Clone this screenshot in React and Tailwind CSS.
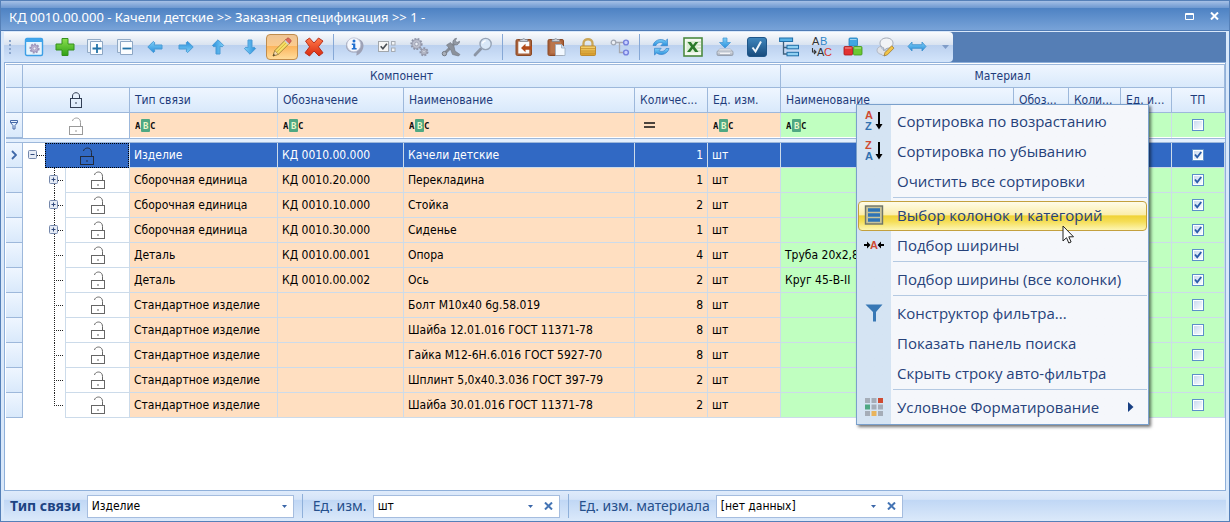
import React from "react";

const svg = (children, size = 20) => (
  <svg width={size} height={size} viewBox="0 0 20 20" fill="none" className="overflow-visible" aria-hidden="true">
    {children}
  </svg>
);

function Defs() {
  const g = (id, a, b) => (
    <linearGradient id={id} x1="0" y1="0" x2="0" y2="1">
      <stop offset="0" stopColor={a} />
      <stop offset="1" stopColor={b} />
    </linearGradient>
  );
  return (
    <svg width="0" height="0" className="absolute" aria-hidden="true">
      <defs>
        {g("gBlue", "#7fd0f7", "#2a8fdc")}
        {g("gGreen", "#8be04e", "#2fa016")}
        {g("gRed", "#ff7a4a", "#d92a10")}
        {g("gGold", "#f7d774", "#d79a26")}
        {g("gCheck", "#3f86bd", "#174a7c")}
        {g("gGray", "#e4e8ee", "#a3abb8")}
      </defs>
    </svg>
  );
}

const blueArrow = (rotation) =>
  svg(
    <path
      transform={`rotate(${rotation} 10 10)`}
      d="M2.8 10 L8.4 4.4 L9.8 5.8 L9.2 8 H17 V12 H9.2 L9.8 14.2 L8.4 15.6 Z"
      fill="url(#gBlue)"
      stroke="#4a9bd6"
      strokeWidth="1"
      strokeLinejoin="round"
    />
  );

const stackedBox = (plus) =>
  svg(
    <>
      <path d="M2.5 2.5H15.5V15.5H2.5Z" fill="#eaf2fb" stroke="#93abc6" />
      <path d="M5.5 4.5H17.5V17.5H5.5Z" fill="#fbfdff" stroke="#8ca6c4" />
      <path d={plus ? "M7.5 11.5h9M12 7v9" : "M7.5 11.5h9"} stroke="#2373a8" strokeWidth="1.8" />
    </>
  );

const cog = (cx, cy, r, fill, stroke) => (
  <>
    <circle cx={cx} cy={cy} r={r} fill={fill} stroke={stroke} strokeWidth="2.2" strokeDasharray="1.8 1.2" />
    <circle cx={cx} cy={cy} r={r - 0.6} fill={fill} stroke={stroke} strokeWidth="0.7" />
    <circle cx={cx} cy={cy} r={r * 0.35} fill="#eef2f8" stroke={stroke} strokeWidth="0.7" />
  </>
);

const clipboard = (front) =>
  svg(
    <>
      <rect x="2" y="2.5" width="15.5" height="16" rx="1.4" fill="#a9613a" stroke="#8a4925" />
      {front}
      <path d="M6 4.5V2.6h2.2C8.4 1.4 11 1.4 11.3 2.6h2.2v1.9z" fill="#c9cfd8" stroke="#7a828e" strokeWidth="0.7" />
    </>
  );

const icons = {
  settings: svg(
    <>
      <rect x="1.5" y="1.5" width="17" height="17" rx="1.5" fill="#e6f4fd" stroke="#3c9fe6" strokeWidth="1.4" />
      <path d="M1.5 5V3q0-1.5 1.5-1.5h14q1.5 0 1.5 1.5v2z" fill="#3fa5ec" />
      {cog(10.5, 11.5, 4, "#bcb4d2", "#9b93ba")}
    </>
  ),
  add: svg(
    <path d="M7 1.5h6V7h6v6h-6v5.5H7V13H1V7h6z" fill="url(#gGreen)" stroke="#35901c" strokeLinejoin="round" />
  ),
  expand: stackedBox(true),
  collapse: stackedBox(false),
  left: blueArrow(0),
  right: blueArrow(180),
  up: blueArrow(90),
  down: blueArrow(270),
  edit: svg(
    <>
      <path d="M1 19l1.8-5.4L14.2 2.2l3.7 3.7L6.4 17.3z" fill="#f7e069" stroke="#94742c" strokeWidth="0.8" />
      <path d="M4 15.8L15.8 4" stroke="#d8b135" strokeWidth="1" />
      <path d="M13 3.4L15 1.4q1-1 2.2 0l1.5 1.5q1 1 0 2L16.7 7z" fill="#e0675b" stroke="#a9453c" strokeWidth="0.7" />
      <path d="M12.4 4l1-1 3.7 3.7-1 1z" fill="#cdd3db" />
      <path d="M1 19l1.8-5.4 3.6 3.7z" fill="#f3d9b0" stroke="#94742c" strokeWidth="0.6" />
      <path d="M1 19l.7-2.2 1.5 1.5z" fill="#3c3325" />
    </>
  ),
  remove: svg(
    <path
      d="M1.5 4L5.5 1L10 6L14.5 1L19 4L14.4 9.8L19 15.8L15 19L10 14L5.5 19L1 15.8L5.6 9.8Z"
      fill="url(#gRed)" stroke="#b32511" strokeWidth="0.9" strokeLinejoin="round"
    />
  ),
  info: svg(
    <>
      <path d="M9.5 1.2c5.2 0 9 3 9 7.2 0 4-2.5 8.4-7.4 10.2.6-1.5.7-2.2.4-3.1C5 16.2 1 13 1 8.4c0-4.2 3.6-7.2 8.5-7.2z" fill="#9da1b5" />
      <circle cx="8.8" cy="7.8" r="7" fill="#f5f7fd" stroke="#b9bfd2" strokeWidth="0.8" />
      <circle cx="9" cy="4" r="1.5" fill="#1f6fd0" />
      <path d="M6.8 6.5h3.5v4.5h1.3v1.6H6.8v-1.6h1.3V8H6.8z" fill="#1f6fd0" />
    </>
  ),
  checklist: svg(
    <>
      <rect x="1.5" y="4.5" width="10" height="10" fill="#f6f6f6" stroke="#a2a7ac" />
      <path d="M3.7 9.3l2.2 2.4 4-5" stroke="#4a4f55" strokeWidth="1.7" />
      <rect x="14.5" y="4.5" width="3.5" height="3.5" fill="#f3f5f7" stroke="#a6acb4" />
      <rect x="14.5" y="11" width="3.5" height="3.5" fill="#f3f5f7" stroke="#a6acb4" />
    </>
  ),
  gears: svg(
    <>
      {cog(7.5, 7, 5, "#bcbfcd", "#8f94a6")}
      {cog(15, 14.8, 3.4, "#bcbfcd", "#8f94a6")}
    </>
  ),
  tools: svg(
    <>
      <path d="M3 17L14 6" stroke="#858b95" strokeWidth="3" strokeLinecap="round" />
      <path d="M12 6.5c-.6-2.6 1-5 3.6-5.2l-1.3 2.5 1.7 1.7 2.6-1.2c0 2.5-2.5 4.2-4.8 3.5z" fill="#9299a4" stroke="#747a84" strokeWidth="0.7" />
      <circle cx="3.4" cy="16.6" r="2.2" fill="#aab0ba" stroke="#747a84" />
      <path d="M5.5 8l4-2.5 3.5 4 1 4.5 5 3.5-1.5 1.5-6-1.5-1.5-4z" fill="#8b919b" stroke="#70767f" strokeWidth="0.6" />
    </>
  ),
  search: svg(
    <>
      <path d="M2 18l5.700-6" stroke="#8b95a5" strokeWidth="2.8" strokeLinecap="round" />
      <circle cx="12.6" cy="7" r="5.6" fill="#d9e8f8" stroke="#97a4b6" strokeWidth="1.4" />
      <path d="M9.5 6.5c.4-1.7 1.6-2.6 3.2-2.7" stroke="#fff" strokeWidth="1.3" />
    </>
  ),
  pasteArrow: clipboard(
    <>
      <path d="M4.3 4.5h11v12h-11z" fill="#fafafa" />
      <path d="M7 11l4.5-4.2v2.5H18v3.4h-6.5v2.500z" fill="#b24a17" />
    </>
  ),
  paste: clipboard(
    <>
      <path d="M4.3 4.5h11v12h-11z" fill="#b9754c" />
      <path d="M9.5 7.500h6l3.5 3.5v7.5H9.5z" fill="#f2f8ff" stroke="#9cadc0" strokeWidth="0.8" />
      <path d="M15.5 7.500V11H19" fill="#cfe0f2" stroke="#9cadc0" strokeWidth="0.8" />
    </>
  ),
  lock: svg(
    <>
      <path d="M5.5 10V6.300c0-5.400 9-5.400 9 0V10" stroke="#caa658" strokeWidth="2.300" />
      <rect x="2.5" y="9" width="15" height="9.5" rx="1" fill="url(#gGold)" stroke="#ba8526" strokeWidth="0.9" />
      <path d="M3 11.5h14M3 14h14M3 16.3h14" stroke="#c8922f" strokeWidth="0.8" />
    </>
  ),
  nodes: svg(
    <>
      <path d="M5 5.500h9M9.5 5.5v10H14" stroke="#a7a9b0" strokeWidth="1.3" />
      <circle cx="3.5" cy="5.5" r="2.3" fill="#eef1f6" stroke="#a2a8b4" strokeWidth="1.3" />
      <circle cx="16" cy="5.5" r="2.4" fill="#c8d0ff" stroke="#7480dc" strokeWidth="1.4" />
      <circle cx="16" cy="15.5" r="2.4" fill="#c8d0ff" stroke="#7480dc" strokeWidth="1.4" />
    </>
  ),
  refresh: svg(
    <>
      <path d="M2 8.5C3 3.5 9.5.5 14.300 4L16.5 2v6.700h-6.700l2.200-2.300C9 4.500 6 6 5 8.500z" fill="url(#gBlue)" stroke="#3a84cc" strokeWidth="0.7" />
      <path d="M18 11.5c-1 5-7.500 8-12.300 4.500L3.500 18v-6.700h6.700L8 13.600c3 1.900 6 .4 7-2.100z" fill="url(#gBlue)" stroke="#3a84cc" strokeWidth="0.7" />
    </>
  ),
  excel: svg(
    <>
      <rect x="1" y="1" width="18" height="18" fill="#f4f8f1" stroke="#4c8a40" strokeWidth="1.6" />
      <path d="M13 5h5M13 8h5M13 11h5M13 14h5" stroke="#a9c9a0" strokeWidth="0.8" />
      <rect x="3.5" y="4" width="11" height="11.5" fill="#dbeed4" />
      <path d="M4.5 5h3.400L10 8l2.300-3h3l-3.700 4.800L15.500 15H12l-2.200-3.200L7.200 15H4l4-5.200z" fill="#2b7a2a" />
    </>
  ),
  download: svg(
    <>
      <path d="M8 1h4v4.500h3.500L10 11 4.500 5.500H8z" fill="url(#gBlue)" stroke="#3e92d2" strokeWidth="0.7" />
      <path d="M4.5 12h11l2.500 3H2z" fill="#eef1f5" stroke="#a9b0ba" strokeWidth="0.7" />
      <rect x="2" y="14" width="16" height="4.5" rx="1.2" fill="url(#gGray)" stroke="#8e97a4" strokeWidth="0.8" />
      <path d="M5 16.300h10" stroke="#fff" />
    </>
  ),
  check: svg(
    <>
      <rect x="0.5" y="0.5" width="19" height="19" rx="2.5" fill="url(#gCheck)" stroke="#1f5689" />
      <path d="M5.5 10.500l3 4 5.500-10" stroke="#eef5fb" strokeWidth="2" />
    </>
  ),
  tree: svg(
    <>
      <path d="M4.5 5v12H9M4.5 10.500H9" stroke="#3f5f7c" strokeWidth="1.3" />
      <rect x="0.6" y="1" width="13" height="3.5" fill="#58b2e6" stroke="#1f6ea8" />
      <rect x="8" y="8.3" width="11.5" height="3.5" fill="#8fd0f2" stroke="#1f6ea8" />
      <rect x="8" y="15.3" width="11.5" height="3.5" fill="#8fd0f2" stroke="#1f6ea8" />
    </>
  ),
  replace: svg(
    <g fontFamily="Liberation Sans, sans-serif" fontSize="11">
      <text x="1" y="8" fill="#333">A</text>
      <text x="9" y="8" fill="#2f86c8">B</text>
      <text x="6" y="19" fill="#333">A</text>
      <text x="13" y="19" fill="#d8382a">C</text>
      <path d="M1.5 11v4h3M3 13l2 2-2 2" stroke="#333" strokeWidth="1.1" />
    </g>
  ),
  cubes: svg(
    <>
      <rect x="6" y="1" width="8.5" height="8" rx="1" fill="#3fa6e2" stroke="#1f7dbb" strokeWidth="0.8" />
      <rect x="1" y="9.5" width="8.5" height="8.5" rx="1" fill="#e23232" stroke="#a91818" strokeWidth="0.8" />
      <rect x="10.5" y="9.5" width="8.5" height="8.5" rx="1" fill="#6cc832" stroke="#3f941a" strokeWidth="0.8" />
      <path d="M7 2.500h6.500M2 11h6.500M11.500 11H18" stroke="#fff" strokeOpacity="0.5" />
    </>
  ),
  comment: svg(
    <>
      <path d="M7 17.500c-3-.3-5-1.800-5-4.200 0-2 1.800-3.600 4-4 .2 3 4.300 5.500 8 5-1 2-2.500 3-4.500 3.200L8 19z" fill="#dfe2e8" stroke="#a9afba" strokeWidth="0.8" />
      <path d="M11.5 1C15.500 1 18 3.300 18 6.200s-2.600 5-6 5.100L8.500 13.500l.3-2.600C6.500 10.200 5 8.500 5 6.200 5 3.300 7.600 1 11.500 1z" fill="#f1f3f6" stroke="#a3aab6" strokeWidth="1" />
      <path d="M9 19l1-3.500 6.700-6.700 2.300 2.300-6.600 6.700z" fill="#f2c446" stroke="#94702a" strokeWidth="0.7" />
    </>
  ),
  horizontal: svg(
    <path d="M1 9.500L5 5v2.700h10V5l4 4.500-4 4.500v-2.700H5V14z" fill="url(#gBlue)" stroke="#3e8fcc" strokeWidth="0.8" strokeLinejoin="round" />
  ),
};

const toolbar = [
  [
    ["settings", "Настройки", 32], ["add", "Добавить", 30], ["expand", "Развернуть", 30],
    ["collapse", "Свернуть", 30], ["left", "Влево", 30], ["right", "Вправо", 32],
    ["up", "Вверх", 32], ["down", "Вниз", 32], ["edit", "Редактировать", 32], ["remove", "Удалить", 32],
  ],
  [
    ["info", "Информация", 32], ["checklist", "Свойства", 32], ["gears", "Параметры", 32],
    ["tools", "Инструменты", 32], ["search", "Поиск", 32],
  ],
  [
    ["pasteArrow", "Вставить ссылку", 32], ["paste", "Вставить", 32],
    ["lock", "Блокировка", 32], ["nodes", "Структура", 32],
  ],
  [
    ["refresh", "Обновить", 32], ["excel", "Экспорт", 32], ["download", "Загрузить", 32],
    ["check", "Проверить", 32], ["tree", "Дерево", 32], ["replace", "Заменить", 32],
    ["cubes", "Состав", 32], ["comment", "Комментарий", 32], ["horizontal", "Ширина", 32],
  ],
];

function ToolButton({ name, label, width }) {
  const active = name === "edit";
  return (
    <button
      type="button"
      aria-label={label}
      aria-pressed={active || undefined}
      className={
        (width === 30 ? "w-[30px] " : "w-8 ") +
        "flex h-[26px] shrink-0 items-center justify-center " +
        (active
          ? "rounded-sm border border-[#c08c4c] bg-[linear-gradient(#eec596_0%,#fccb8d_45%,#fbb45c_46%,#ffdc9a_100%)]"
          : "")
      }
    >
      {icons[name]}
    </button>
  );
}

function Padlock({ open, className }) {
  return (
    <svg width="16" height="18" viewBox="0 0 16 18" fill="none" stroke="currentColor" className={className} aria-hidden="true">
      {open ? (
        <>
          <path d="M4.5 4C5 .2 12.500-.6 12.500 5.500V9" strokeWidth="1" />
          <rect x="1.5" y="9.5" width="13" height="8" />
        </>
      ) : (
        <>
          <path d="M4.5 7.500V5C4.5.6 11.500.6 11.500 5V7.500" strokeWidth="1" />
          <rect x="2.5" y="7.5" width="11" height="9" />
        </>
      )}
      <rect x="7" y={open ? 13 : 11} width="2" height="2" fill="currentColor" fillOpacity="0.5" stroke="none" />
    </svg>
  );
}

function Abc() {
  return (
    <svg width="21" height="15" viewBox="0 0 21 15" className="block" role="img" aria-label="Содержит">
      <rect x="6" y="1" width="9" height="13" rx="1" fill="#4fa883" />
      <g fontFamily="DejaVu Sans Mono, monospace" fontSize="9" fontWeight="700">
        <text x="0" y="11" fill="#111">A</text>
        <text x="8" y="11" fill="#e9f6c9">B</text>
        <text x="15" y="11" fill="#111">C</text>
      </g>
    </svg>
  );
}

function Tick({ checked, label }) {
  return (
    <label className="relative mx-auto block size-3">
      <input
        type="checkbox"
        defaultChecked={checked}
        aria-label={label}
        className="peer block size-3 appearance-none border border-[#5c8fca] bg-[#dfebfa] bg-linear-to-br from-[#c4d6ee] to-white shadow-[inset_0_0_0_1px_#fff]"
      />
      <svg viewBox="0 0 12 12" className="pointer-events-none absolute inset-0 hidden size-3 peer-checked:block" fill="none" aria-hidden="true">
        <path d="M3 5.500L5.200 8.300L9.200 3" stroke="#2a5ca8" strokeWidth="1.900" />
      </svg>
    </label>
  );
}

function TreeCell({ level, last, expandable }) {
  if (level === 0) {
    return (
      <div className="flex h-6">
        <TreeLines width={22} root />
        <div className="-mb-px flex flex-1 items-center justify-center border border-dotted border-black bg-[#3169c4] text-[#222b3d]">
          <Padlock open />
        </div>
      </div>
    );
  }
  return (
    <div className="flex h-[25px]">
      <TreeLines width={42} last={last} expandable={expandable} />
      <div className="flex flex-1 items-center justify-center border-b border-l border-[#ccdbea] text-[#666]">
        <Padlock open />
      </div>
    </div>
  );
}

function TreeLines({ width, root, last, expandable }) {
  const x = root ? 10 : 31;
  return (
    <svg width={width} height="25" viewBox={`0 0 ${width} 25`} className="block shrink-0" fill="none" aria-hidden="true">
      {!root && <path d={`M${x + 0.5} 0V${last ? 12 : 25}`} stroke="#222" strokeDasharray="1 1" />}
      <path d={`M${x} 12.500H${width - 1}`} stroke="#222" strokeDasharray="1 1" />
      {(root || expandable) && (
        <>
          <rect x={x - 4.5} y="7.5" width="8" height="8" rx="1" fill="#e6ecf6" stroke="#7487ab" />
          <path d={`M${x - 2.5} 11.500h4${root ? "" : `M${x - 0.5} 9.500v4`}`} stroke="#31497c" strokeWidth="1" />
        </>
      )}
    </svg>
  );
}

const rows = [
  ["Изделие", "КД 0010.00.000", "Качели детские", 1, "", true],
  ["Сборочная единица", "КД 0010.20.000", "Перекладина", 1, "", true],
  ["Сборочная единица", "КД 0010.10.000", "Стойка", 2, "", true],
  ["Сборочная единица", "КД 0010.30.000", "Сиденье", 1, "", true],
  ["Деталь", "КД 0010.00.001", "Опора", 4, "Труба 20х2,8", true],
  ["Деталь", "КД 0010.00.002", "Ось", 2, "Круг 45-В-II", true],
  ["Стандартное изделие", "", "Болт М10х40 6g.58.019", 8, "", false],
  ["Стандартное изделие", "", "Шайба 12.01.016 ГОСТ 11371-78", 8, "", false],
  ["Стандартное изделие", "", "Гайка М12-6Н.6.016 ГОСТ 5927-70", 8, "", false],
  ["Стандартное изделие", "", "Шплинт 5,0х40.3.036 ГОСТ 397-79", 2, "", false],
  ["Стандартное изделие", "", "Шайба 30.01.016 ГОСТ 11371-78", 2, "", false],
];

const TH = "border-b border-r border-[#9db8db] bg-linear-to-b from-[#eff6ff] to-[#d9e9fb] p-0 font-normal text-[#1e3c7b]";

function Grid() {
  return (
    <table className="w-full table-fixed border-separate border-spacing-0 border-t border-[#9db8db] text-xs leading-4">
      <colgroup>
        <col className="w-[17px]" />
        <col className="w-[107px]" />
        <col className="w-[148px]" />
        <col className="w-[126px]" />
        <col className="w-[231px]" />
        <col className="w-[73px]" />
        <col className="w-[73px]" />
        <col />
        <col className="w-[55px]" />
        <col className="w-[52px]" />
        <col className="w-[51px]" />
        <col className="w-[53px]" />
      </colgroup>
      <thead>
        <tr className="h-[23px]">
          <th className={TH} />
          <th colSpan={6} className={TH}>Компонент</th>
          <th colSpan={5} className={TH}>Материал</th>
        </tr>
        <tr className="h-[25px]">
          <th className={TH} />
          <th className={TH}><Padlock className="mx-auto block text-[#333f55]" /></th>
          {["Тип связи", "Обозначение", "Наименование", "Количес...", "Ед. изм.", "Наименование", "Обоз...", "Коли...", "Ед. и..."].map((t, i) => (
            <th key={i} className={TH + " overflow-hidden pl-[5px] text-left whitespace-nowrap"}>{t}</th>
          ))}
          <th className={TH}>ТП</th>
        </tr>
        <tr className="h-[25px]">
          <td className={TH}>
            <svg width="8" height="10" viewBox="0 0 8 10" fill="none" stroke="#4669a8" className="mx-auto block" aria-hidden="true">
              <path d="M.5.5h7v2L5 5.500v3.500H3V5.500L.5 2.500zM.5 2.500h7" />
            </svg>
          </td>
          <td className="border-r border-[#9db8db] bg-white p-0"><Padlock open className="mx-auto block text-[#9a9a9a]" /></td>
          {[0, 1, 2, 3, 4].map((i) => (
            <td key={i} className="border-r border-b border-r-[#ccdbea] border-b-white bg-[#ffdfc1] p-0 pl-[5px]">
              {i === 3 ? (
                <svg width="20" height="6" viewBox="0 0 20 6" className="block" role="img" aria-label="Равно">
                  <path d="M4 1h11M4 5h11" stroke="#111" strokeWidth="1.6" />
                </svg>
              ) : <Abc />}
            </td>
          ))}
          <td className="border-r border-b border-r-[#ccdbea] border-b-white bg-[#c0ffc0] p-0 pl-[5px]"><Abc /></td>
          {[0, 1, 2].map((i) => <td key={i} className="border-r border-b border-r-[#ccdbea] border-b-white bg-[#c0ffc0] p-0" />)}
          <td className="border-b border-white bg-[#c0ffc0] p-0"><Tick label="Фильтр ТП" /></td>
        </tr>
        <tr className="h-[5px]">
          <td colSpan={12} className="border-y border-[#9db8db] bg-[#e3effd] p-0" />
        </tr>
      </thead>
      <tbody>
        {rows.map(([type, code, name, qty, material, tp], i) => {
          const selected = i === 0;
          const base = "h-[25px] overflow-hidden border-b border-r border-[#ccdbea] p-0 px-1 whitespace-nowrap ";
          const peach = base + (selected ? "bg-[#3169c4] text-white" : "bg-[#ffdfc1] text-black");
          const green = base + (selected ? "bg-[#3169c4] text-white" : "bg-[#c0ffc0] text-black");
          return (
            <tr key={i} aria-selected={selected}>
              <td className={TH}>
                {selected && (
                  <svg width="6" height="10" viewBox="0 0 6 10" fill="none" className="mx-auto block" aria-hidden="true">
                    <path d="M1 1l4 4-4 4" stroke="#3f68a8" strokeWidth="1.8" />
                  </svg>
                )}
              </td>
              <td className="h-[25px] border-r border-[#ccdbea] bg-white p-0 align-top">
                <TreeCell level={selected ? 0 : 1} last={i === rows.length - 1} expandable={i < 4} />
              </td>
              <td className={peach}>{type}</td>
              <td className={peach}>{code}</td>
              <td className={peach}>{name}</td>
              <td className={peach + " text-right"}>{qty}</td>
              <td className={peach}>шт</td>
              <td className={green}>{material}</td>
              <td className={green} />
              <td className={green} />
              <td className={green} />
              <td className={green}><Tick checked={tp} label={`ТП: ${name}`} /></td>
            </tr>
          );
        })}
      </tbody>
    </table>
  );
}

const sortIcon = (a, b) =>
  svg(
    <>
      <g fontFamily="Liberation Sans, sans-serif" fontSize="11" fontWeight="700">
        <text x="1" y="8" fill="#cf4b32">{a}</text>
        <text x="1" y="19" fill="#3272b0">{b}</text>
      </g>
      <path d="M15 1v14" stroke="#000" strokeWidth="2" />
      <path d="M11.5 13h7L15 18.500z" fill="#000" />
    </>
  );

const menu = [
  ["Сортировка по возрастанию", sortIcon("A", "Z")],
  ["Сортировка по убыванию", sortIcon("Z", "A")],
  ["Очистить все сортировки"],
  null,
  ["Выбор колонок и категорий", svg(
    <>
      <rect x="1.5" y="1" width="17" height="18" fill="#c8c49a" stroke="#6d7468" strokeWidth="1.4" />
      <path d="M4 5h12M4 10h12M4 15h12" stroke="#2f74b5" strokeWidth="3.6" />
    </>
  )],
  ["Подбор ширины", svg(
    <>
      <path d="M0 9h3V6.500L6.500 10 3 13.500V11H0zM20 9h-3V6.500L13.500 10l3.500 3.500V11h3z" fill="#000" />
      <text x="6" y="14" fontFamily="Liberation Sans, sans-serif" fontSize="11" fontWeight="700" fill="#cf4b32">A</text>
    </>
  )],
  null,
  ["Подбор ширины (все колонки)"],
  null,
  ["Конструктор фильтра...", svg(<path d="M1.5 1.500h17L12 9v9.500H9V9z" fill="#3878b5" />)],
  ["Показать панель поиска"],
  ["Скрыть строку авто-фильтра"],
  null,
  ["Условное Форматирование", svg(
    [0, 1, 2].flatMap((r) => [0, 1, 2].map((c) => (
      <rect key={`${r}${c}`} x={1 + c * 6.5} y={1 + r * 6.5} width="5" height="5"
        fill={r === 0 && c === 2 ? "#cf4b32" : r === 1 && c === 0 ? "#4fa883" : r === 2 && c === 1 ? "#e9b45c" : "#a5adb8"} />
    )))
  )],
];

function ContextMenu() {
  return (
    <div
      role="menu"
      className="absolute top-[103px] left-[855px] w-[293px] border border-[#7aa0cc] bg-[#f5f7fb] bg-linear-to-r from-[#d5e4f3] from-[34px] to-[#f5f7fb] to-[34px] p-px pt-0.5 font-['Open_Sans','Noto_Sans',sans-serif] text-[15px] leading-5 text-[#26427a] shadow-[2px_2px_3px_rgba(0,0,0,0.55)]"
    >
      {menu.map((item, i) => {
        if (!item) return <div key={i} role="separator" className="ml-[35px] h-1 border-t border-[#b4c9e2]" />;
        const [label, icon] = item;
        const hot = i === 4;
        return (
          <button
            key={i}
            type="button"
            role="menuitem"
            className={
              "flex h-[30px] w-full items-center border pb-0.5 text-left " +
              (hot
                ? "rounded-sm border-[#c3a03e] bg-[linear-gradient(#fffce8_0%,#fbeeac_45%,#f0d337_50%,#f5de58_70%,#fdf6b4_100%)]"
                : "border-transparent")
            }
          >
            <span className="flex w-[30px] shrink-0 justify-center">{icon}</span>
            <span className="ml-2 flex-1 whitespace-nowrap">{label}</span>
            {i === menu.length - 1 && (
              <svg width="6" height="10" viewBox="0 0 6 10" className="mr-3 shrink-0" aria-hidden="true">
                <path d="M0 0l5.500 5L0 10z" fill="#173f82" />
              </svg>
            )}
          </button>
        );
      })}
    </div>
  );
}

function Combo({ id, label, value, clear, bold, width }) {
  return (
    <div className="flex items-center">
      <label htmlFor={id} className={"pr-[6px] font-['Noto_Sans','Open_Sans',sans-serif] text-sm " + (bold ? "font-bold text-[#1c4382]" : "text-[#26508c]")}>
        {label}
      </label>
      <div className={"relative flex h-[23px] items-center border border-[#a5bddf] bg-white " + width}>
        <select id={id} defaultValue={value} className="h-full w-full appearance-none bg-transparent pl-1 text-xs text-black outline-none">
          <option>{value}</option>
        </select>
        <svg width="5" height="3" viewBox="0 0 5 3" className={"pointer-events-none absolute " + (clear ? "right-[26px]" : "right-[6px]")} aria-hidden="true">
          <path d="M0 0h5L2.500 3z" fill="#3a66a8" />
        </svg>
        {clear && (
          <button type="button" aria-label="Очистить" className="absolute right-[6px]">
            <svg width="9" height="8" viewBox="0 0 9 8" className="block" aria-hidden="true">
              <path d="M1 .5l7 7M8 .5l-7 7" stroke="#4474b4" strokeWidth="2" />
            </svg>
          </button>
        )}
      </div>
    </div>
  );
}

export default function App() {
  return (
    <div className="relative flex min-h-screen flex-col overflow-hidden border border-[#5580b8] bg-[#d9e8fa] font-['DejaVu_Sans_Condensed','Noto_Sans',sans-serif]">
      <Defs />
      <header>
        <div className="h-[7px] bg-linear-to-b from-[#a5c0e6] to-[#6d98d0]" />
        <div className="flex h-[22px] items-center justify-between bg-linear-to-b from-[#4d82c3] to-[#78a3d8] pr-[10px] pl-2">
          <h1 className="pb-1 font-['Noto_Sans','Open_Sans',sans-serif] text-[13px] leading-4 text-white">КД 0010.00.000 - Качели детские &gt;&gt; Заказная спецификация &gt;&gt; 1 -</h1>
          <div className="flex items-center gap-4 pb-1.5">
            <button type="button" aria-label="Развернуть">
              <svg width="9" height="7" viewBox="0 0 9 7" className="block" aria-hidden="true">
                <path d="M.5.5h8v6h-8zM0 1.500h9" fill="none" stroke="#fff" />
              </svg>
            </button>
            <button type="button" aria-label="Закрыть">
              <svg width="9" height="8" viewBox="0 0 9 8" className="block" aria-hidden="true">
                <path d="M1 .5l7 7M8 .5l-7 7" stroke="#fff" strokeWidth="2" />
              </svg>
            </button>
          </div>
        </div>
      </header>
      <main className="flex flex-1 flex-col border-t border-[#4f7bb5] px-[3px]">
        <div className="mt-px flex bg-[#557eb5]">
          <div role="toolbar" className="flex h-[30px] items-center rounded-r-sm bg-[linear-gradient(#fafbfd_0%,#d9e3f0_43%,#bcd1ef_45%,#d3e5fb_100%)] pr-1">
            <svg width="14" height="16" viewBox="0 0 14 16" className="shrink-0" aria-hidden="true">
              <path d="M5 1h2v2H5zM5 5h2v2H5zM5 9h2v2H5zM5 13h2v2H5z" fill="#8aa5cc" />
            </svg>
            {toolbar.map((group, gi) => (
              <React.Fragment key={gi}>
                {gi > 0 && <div className="mr-[5px] ml-[3px] h-[26px] w-px bg-[#86a8d6]" />}
                {group.map(([name, label, width]) => (
                  <ToolButton key={name} name={name} label={label} width={width} />
                ))}
              </React.Fragment>
            ))}
            <button type="button" aria-label="Ещё" className="flex h-[26px] w-4 items-center justify-end">
              <svg width="7" height="4" viewBox="0 0 7 4" aria-hidden="true"><path d="M0 0h7L3.500 4z" fill="#7f9cc8" /></svg>
            </button>
          </div>
        </div>
        <div className="flex-1 border border-[#8fb0da] bg-white pt-px pl-px">
          <Grid />
        </div>
        <footer className="flex h-[30px] items-center bg-[linear-gradient(#dfebfb_0%,#d5e4f8_28%,#c0d7f5_30%,#dbe9fa_100%)] pl-[6px]">
          <Combo id="link" label="Тип связи" value="Изделие" bold width="w-[207px]" />
          <div className="mr-[10px] ml-2 h-6 w-px bg-[#8fb0da]" />
          <Combo id="unit" label="Ед. изм." value="шт" clear width="w-[187px]" />
          <div className="mr-[10px] ml-2 h-6 w-px bg-[#8fb0da]" />
          <Combo id="matunit" label="Ед. изм. материала" value="[нет данных]" clear width="w-[187px]" />
        </footer>
      </main>
      <ContextMenu />
      <svg width="13" height="20" viewBox="0 0 13 20" className="pointer-events-none absolute top-[224px] left-[1061px]" aria-hidden="true">
        <path d="M1 1v15l3.500-3.300 2.300 5.300 2.300-1-2.300-5.200h4.700z" fill="#fff" stroke="#222" />
      </svg>
    </div>
  );
}
